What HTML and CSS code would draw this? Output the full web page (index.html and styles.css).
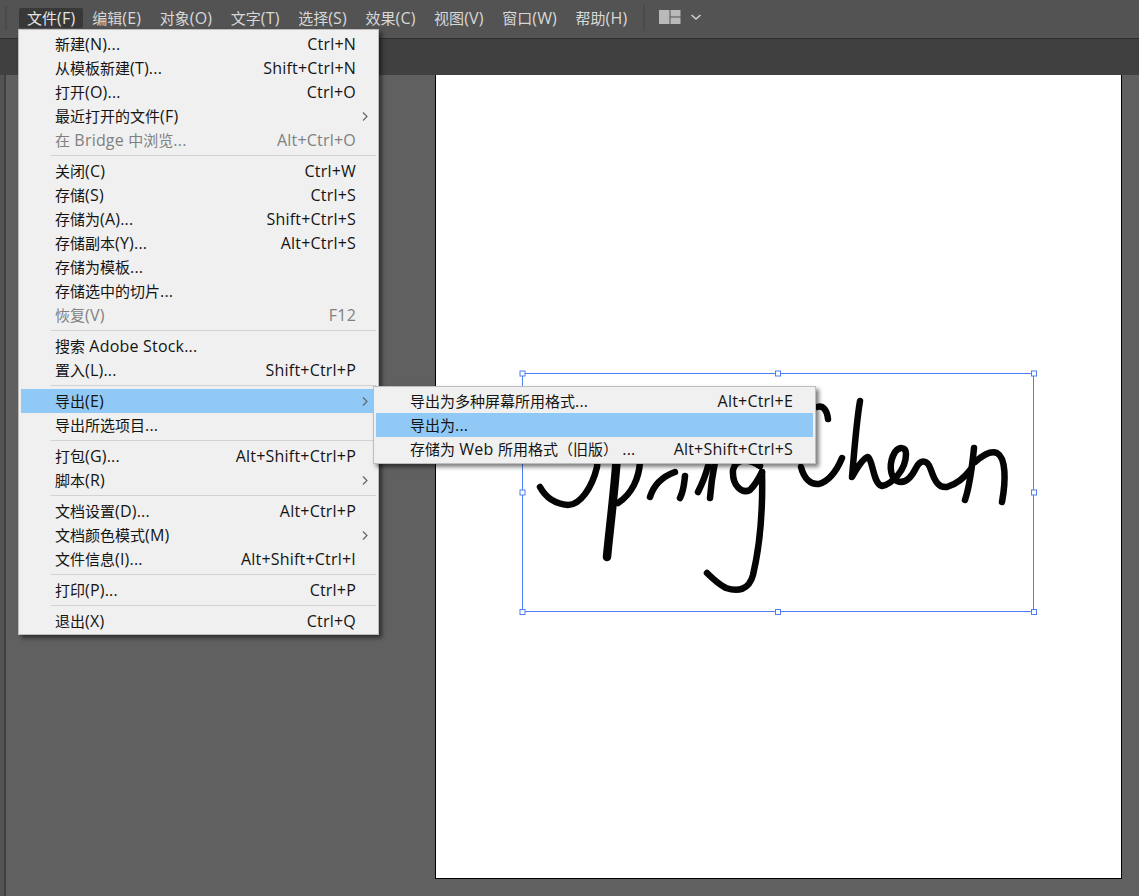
FILE: index.html
```html
<!DOCTYPE html>
<html lang="zh-CN">

<head>
    <meta charset="UTF-8">
    <title>Illustrator 文件菜单</title>
    <link rel="stylesheet" href="styles.css">
</head>

<body>
    <div class="app">
        <div class="menubar">
            <span class="grip"></span>
            <span class="top-item active">文件<span class="en">(F)</span></span>
            <span class="top-item">编辑<span class="en">(E)</span></span>
            <span class="top-item">对象<span class="en">(O)</span></span>
            <span class="top-item">文字<span class="en">(T)</span></span>
            <span class="top-item">选择<span class="en">(S)</span></span>
            <span class="top-item">效果<span class="en">(C)</span></span>
            <span class="top-item">视图<span class="en">(V)</span></span>
            <span class="top-item">窗口<span class="en">(W)</span></span>
            <span class="top-item">帮助<span class="en">(H)</span></span>
            <span class="bar-sep"></span>
            <svg class="layout-icon" width="44" height="16" viewBox="0 0 44 16">
                <rect x="0" y="0" width="10.500" height="14" fill="#b9b9b9" />
                <rect x="11.500" y="0" width="10" height="6.500" fill="#b9b9b9" />
                <rect x="11.500" y="7.500" width="10" height="6.500" fill="#b9b9b9" />
                <path d="M32.500 5 L37 9 L41.500 5" fill="none" stroke="#d0d0d0" stroke-width="1.600" />
            </svg>
        </div>
        <div class="tabband"></div>
        <div class="workspace">
            <div class="sidestrip"></div>
            <div class="artboard">
                <svg class="drawing" width="685" height="803" viewBox="436 75 685 803">
                    <g class="ink">
                        <path d="M540 487 C546 498 556 504 568 505 C580 505 592 488 597 467 C600 450 590 440 580 430" />
                        <path class="stem" d="M618 440 C616 480 610 525 607 557" />
                        <path d="M640 462 C639 478 632 494 618 503" />
                        <path d="M650 497 C654 484 664 476 675 472" />
                        <path d="M680 498 C684 490 684 484 685 476" />
                        <path d="M698 492 C704 480 706 474 708 466 M710 498 C711 485 713 472 715 462" />
                        <path d="M760 466 C748 458 736 458 733 470 C732 486 742 494 750 490 C756 484 760 476 762 472" />
                        <path d="M762 472 C763 510 760 545 753 575 C749 590 738 592 726 588 C718 584 712 578 707 573" />
                        <path d="M817 407 C823 405 827 410 828 419" />
                        <path d="M801 467 C804 479 811 485 819 484 C829 481 837 470 842 458" />
                        <path d="M860 401 C856 425 854 455 852 477 C858 466 864 458 868 457 C873 460 873 484 882 486 C892 484 906 470 906 454 C906 446 899 447 895 452 C889 462 889 476 897 481 C904 484 910 480 916 468 C920 460 927 458 931 470 C935 482 939 488 947 487 C957 484 965 477 971 469" />
                        <path d="M974 448 C972 468 970 485 965 500" />
                        <path d="M975 462 C982 456 990 450 997 453 C1006 458 1006 480 1002 502" />
                    </g>
                    <rect class="selection" x="522.500" y="373.500" width="511" height="238" />
                    <rect class="handle" x="520" y="371" width="5" height="5" />
                    <rect class="handle" x="775.500" y="371" width="5" height="5" />
                    <rect class="handle" x="1031.500" y="371" width="5" height="5" />
                    <rect class="handle" x="520" y="490" width="5" height="5" />
                    <rect class="handle" x="1031.500" y="490" width="5" height="5" />
                    <rect class="handle" x="520" y="609.500" width="5" height="5" />
                    <rect class="handle" x="775.500" y="609.500" width="5" height="5" />
                    <rect class="handle" x="1031.500" y="609.500" width="5" height="5" />
                </svg>
            </div>
        </div>

        <div class="menu file-menu">
            <div class="item"><span>新建<span class="en">(N)...</span></span><span class="en">Ctrl+N</span></div>
            <div class="item"><span>从模板新建<span class="en">(T)...</span></span><span class="en">Shift+Ctrl+N</span></div>
            <div class="item"><span>打开<span class="en">(O)...</span></span><span class="en">Ctrl+O</span></div>
            <div class="item has-sub"><span>最近打开的文件<span class="en">(F)</span></span><svg class="arrow" width="6" height="9" viewBox="0 0 6 9"><path d="M1 .5 L5 4.500 L1 8.500" /></svg></div>
            <div class="item disabled"><span>在<span class="en"> Bridge </span>中浏览<span class="en">...</span></span><span class="en">Alt+Ctrl+O</span></div>
            <div class="sep"></div>
            <div class="item"><span>关闭<span class="en">(C)</span></span><span class="en">Ctrl+W</span></div>
            <div class="item"><span>存储<span class="en">(S)</span></span><span class="en">Ctrl+S</span></div>
            <div class="item"><span>存储为<span class="en">(A)...</span></span><span class="en">Shift+Ctrl+S</span></div>
            <div class="item"><span>存储副本<span class="en">(Y)...</span></span><span class="en">Alt+Ctrl+S</span></div>
            <div class="item"><span>存储为模板<span class="en">...</span></span></div>
            <div class="item"><span>存储选中的切片<span class="en">...</span></span></div>
            <div class="item disabled"><span>恢复<span class="en">(V)</span></span><span class="en">F12</span></div>
            <div class="sep"></div>
            <div class="item"><span>搜索<span class="en"> Adobe Stock...</span></span></div>
            <div class="item"><span>置入<span class="en">(L)...</span></span><span class="en">Shift+Ctrl+P</span></div>
            <div class="sep"></div>
            <div class="item has-sub hot"><span>导出<span class="en">(E)</span></span><svg class="arrow" width="6" height="9" viewBox="0 0 6 9"><path d="M1 .5 L5 4.500 L1 8.500" /></svg></div>
            <div class="item"><span>导出所选项目<span class="en">...</span></span></div>
            <div class="sep"></div>
            <div class="item"><span>打包<span class="en">(G)...</span></span><span class="en">Alt+Shift+Ctrl+P</span></div>
            <div class="item has-sub"><span>脚本<span class="en">(R)</span></span><svg class="arrow" width="6" height="9" viewBox="0 0 6 9"><path d="M1 .5 L5 4.500 L1 8.500" /></svg></div>
            <div class="sep"></div>
            <div class="item"><span>文档设置<span class="en">(D)...</span></span><span class="en">Alt+Ctrl+P</span></div>
            <div class="item has-sub"><span>文档颜色模式<span class="en">(M)</span></span><svg class="arrow" width="6" height="9" viewBox="0 0 6 9"><path d="M1 .5 L5 4.500 L1 8.500" /></svg></div>
            <div class="item"><span>文件信息<span class="en">(I)...</span></span><span class="en">Alt+Shift+Ctrl+I</span></div>
            <div class="sep"></div>
            <div class="item"><span>打印<span class="en">(P)...</span></span><span class="en">Ctrl+P</span></div>
            <div class="sep"></div>
            <div class="item"><span>退出<span class="en">(X)</span></span><span class="en">Ctrl+Q</span></div>
        </div>

        <div class="menu export-menu">
            <div class="item"><span>导出为多种屏幕所用格式<span class="en">...</span></span><span class="en">Alt+Ctrl+E</span></div>
            <div class="item hot"><span>导出为<span class="en">...</span></span></div>
            <div class="item"><span>存储为<span class="en"> Web </span>所用格式（旧版）<span class="en"> ...</span></span><span class="en">Alt+Shift+Ctrl+S</span></div>
        </div>
    </div>
</body>

</html>
```

FILE: styles.css
```css
* {
    box-sizing: border-box;
}

body {
    margin: 0;
    font-family: "Noto Sans CJK SC", sans-serif;
    font-size: 15px;
    background-color: #606060;
}

.en {
    font-family: "Open Sans", "Noto Sans", sans-serif;
    font-size: 16px;
    letter-spacing: 0.2px;
    white-space: pre;
}

.app {
    position: relative;
    display: flex;
    flex-direction: column;
    width: 1139px;
    height: 896px;
    overflow: hidden;
}

.menubar {
    display: flex;
    align-items: center;
    flex: none;
    height: 39px;
    padding: 0 0 2px 5px;
    background-color: #535353;
    border-bottom: 1px solid #2e2e2e;
    color: #d8d8d8;
}

.grip {
    width: 2px;
    height: 24px;
    margin-right: 12px;
    background-color: #4a4a4a;
}

.top-item {
    height: 20px;
    margin-right: 2.500px;
    padding: 0 8px;
    line-height: 20px;
    white-space: nowrap;
}

.top-item.active {
    margin-right: 1px;
    background-color: #383838;
    color: #e4e4e4;
    border-radius: 2px;
}

.bar-sep {
    width: 2px;
    height: 26px;
    margin: 0 14px 0 5px;
    background-color: #4a4a4a;
}

.layout-icon {
    flex: none;
}

.tabband {
    flex: none;
    height: 36px;
    background-color: #404040;
}

.workspace {
    display: flex;
    flex: 1;
    min-height: 0;
    padding-bottom: 17px;
}

.sidestrip {
    flex: none;
    width: 6px;
    margin-right: 429px;
    margin-bottom: -17px;
    background-color: #535353;
    border-right: 2px solid #404040;
}

.artboard {
    flex: none;
    width: 687px;
    background-color: #fff;
    border: 1px solid #000;
    border-top: none;
}

.drawing {
    display: block;
}

.ink path {
    fill: none;
    stroke: #050505;
    stroke-width: 6.500;
    stroke-linecap: round;
    stroke-linejoin: round;
}

.ink .stem {
    stroke-width: 8.500;
}

.selection {
    fill: none;
    stroke: #4f7ff2;
    stroke-width: 1;
}

.handle {
    fill: #fff;
    stroke: #4f7ff2;
    stroke-width: 1;
}

.menu {
    position: absolute;
    background-color: #f0f0f0;
    border: 1px solid #bdbdbd;
    box-shadow: 3px 3px 4px rgba(0, 0, 0, 0.5);
    color: #141414;
}

.file-menu {
    left: 18px;
    top: 29px;
    width: 361px;
    padding: 2px 2px 1px;
}

.export-menu {
    left: 373px;
    top: 386px;
    width: 443px;
    padding: 2px 2px 2px;
}

.item {
    position: relative;
    display: flex;
    justify-content: space-between;
    align-items: center;
    height: 24px;
    padding: 0 20px 0 34px;
    line-height: 24px;
    white-space: nowrap;
}

.item.hot {
    background-color: #90c8f6;
}

.item.disabled {
    color: #808080;
}

.arrow {
    position: absolute;
    right: 8px;
    top: 8px;
    fill: none;
    stroke: #666;
    stroke-width: 1.200;
}

.sep {
    height: 1px;
    margin: 3px 0 3px 30px;
    background-color: #d2d2d2;
}
```
